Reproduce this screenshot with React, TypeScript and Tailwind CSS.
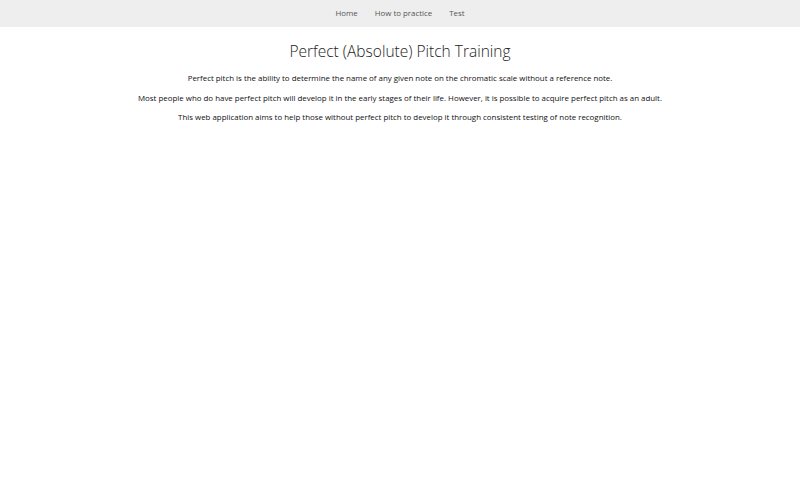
export default function App() {
  return (
    <div className="min-h-screen bg-white font-['Open_Sans',sans-serif] text-[#111]">
      <nav className="flex h-[27px] items-center justify-center gap-[17px] bg-[#eeeeee] text-[7.9px] text-[#555]">
        <a>Home</a>
        <a>How to practice</a>
        <a>Test</a>
      </nav>
      <main className="flex flex-col items-center text-center">
        <h1 className="mt-[13px] text-[15.5px] font-light leading-[22px] text-[#222]">
          Perfect (Absolute) Pitch Training
        </h1>
        <p className="mt-[10px] text-[7.9px] leading-[12px]">
          Perfect pitch is the ability to determine the name of any given note on the chromatic scale without a reference note.
        </p>
        <p className="mt-[7.5px] text-[7.9px] leading-[12px]">
          Most people who do have perfect pitch will develop it in the early stages of their life. However, it is possible to acquire perfect pitch as an adult.
        </p>
        <p className="mt-[7.5px] text-[7.9px] leading-[12px]">
          This web application aims to help those without perfect pitch to develop it through consistent testing of note recognition.
        </p>
      </main>
    </div>
  );
}
